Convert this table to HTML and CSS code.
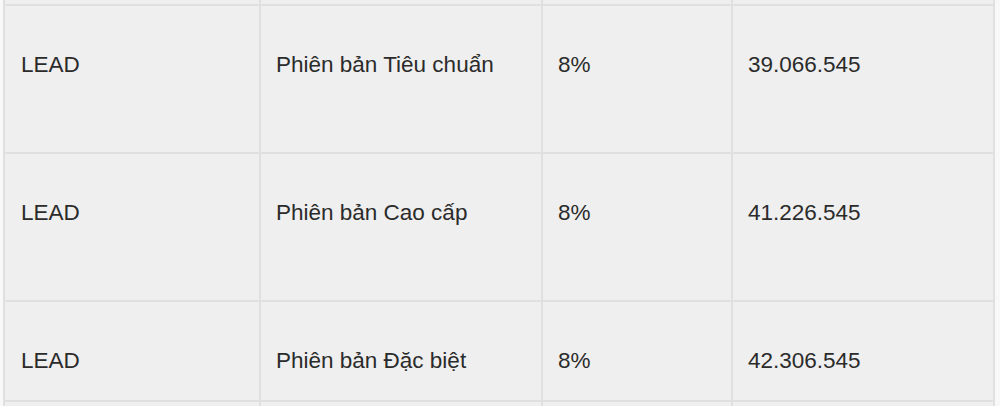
FILE: index.html
```html
<!DOCTYPE html>
<html lang="vi">
<head>
<meta charset="utf-8">
<title>Bảng giá LEAD</title>
<link rel="stylesheet" href="styles.css">
</head>
<body>
<div class="table">
  <div class="cell edge"></div><div class="cell edge"></div><div class="cell edge"></div><div class="cell edge"></div>

  <div class="cell row-tall">LEAD</div>
  <div class="cell row-tall">Phiên bản Tiêu chuẩn</div>
  <div class="cell row-tall">8%</div>
  <div class="cell row-tall">39.066.545</div>

  <div class="cell row-tall">LEAD</div>
  <div class="cell row-tall">Phiên bản Cao cấp</div>
  <div class="cell row-tall">8%</div>
  <div class="cell row-tall">41.226.545</div>

  <div class="cell row-short">LEAD</div>
  <div class="cell row-short">Phiên bản Đặc biệt</div>
  <div class="cell row-short">8%</div>
  <div class="cell row-short">42.306.545</div>

  <div class="cell edge-bottom"></div><div class="cell edge-bottom"></div><div class="cell edge-bottom"></div><div class="cell edge-bottom"></div>
</div>
</body>
</html>
```

FILE: styles.css
```css
html, body {
  margin: 0;
  padding: 0;
  background: #f8f8f8;
  height: 406px;
  overflow: hidden;
}

.table {
  margin-left: 3px;
  width: 992px;
  box-sizing: border-box;
  padding: 0 2px;
  display: grid;
  grid-template-columns: 254px 280px 188px 260px;
  grid-template-rows: 4px 146px 146px 98px 20px;
  gap: 2px;
  background: #e0e0e0;
  font-family: "Liberation Sans", Arial, Helvetica, sans-serif;
  font-size: 22.5px;
  line-height: 25px;
  color: #2b2b2b;
}

.cell {
  background: #efefef;
  padding: 0 14px 0 15px;
  box-sizing: border-box;
  overflow: hidden;
  white-space: nowrap;
}

.cell:first-child,
.cell:nth-child(4n+1) {
  padding-left: 16px;
}

.row-tall,
.row-short {
  padding-top: 46px;
}
```
